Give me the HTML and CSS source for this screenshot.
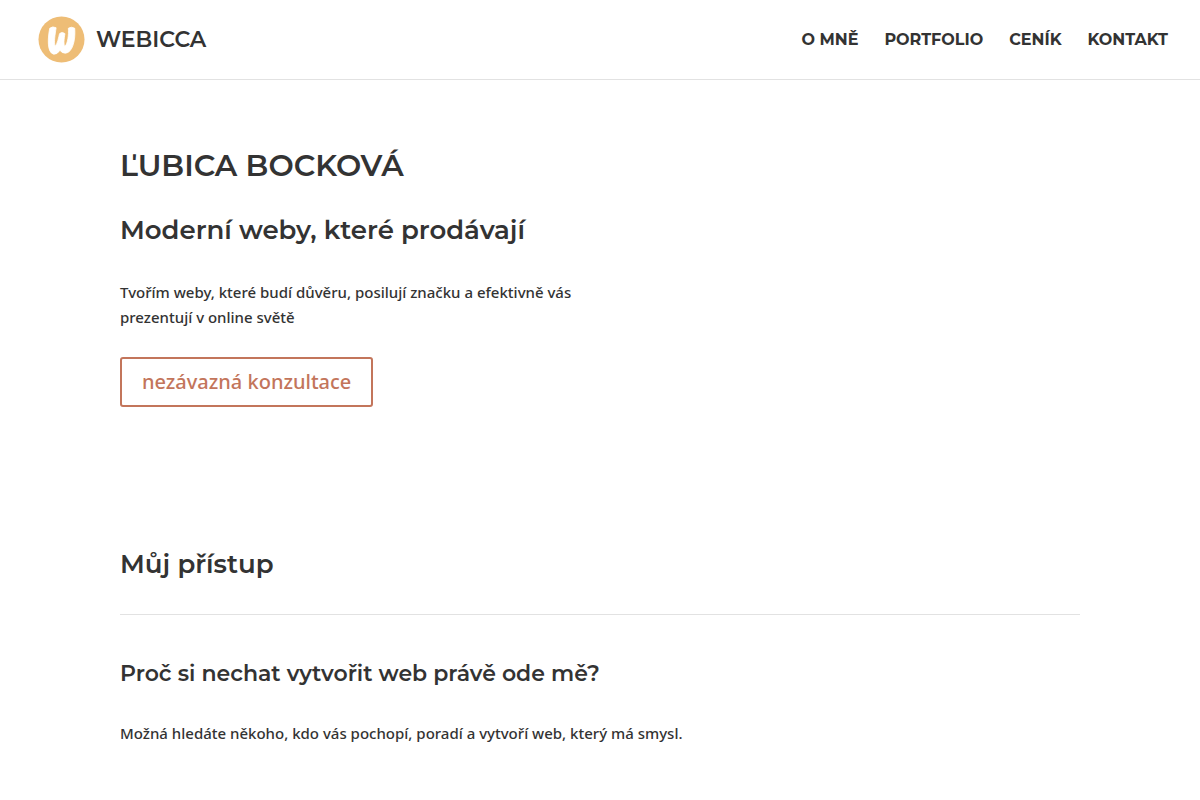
FILE: index.html
```html
<!doctype html>
<html lang="cs">
    <head>
        <meta charset="UTF-8" />
        <meta name="viewport" content="width=device-width, initial-scale=1" />
        <title>Webicca</title>
        <link rel="stylesheet" href="styles.css">
    </head>
    <body>
        <header class="site-header">
            <a class="logo" href="#" aria-label="Webicca">
                <svg class="logo-mark" viewBox="0 0 48 48" aria-hidden="true">
                    <circle cx="24" cy="24" r="23.5" fill="#eebd76" />
                    <path d="M12 12.500 Q15 10 18.500 12 C17.500 19 16 27 17.500 31 C20 28 21 22 22 18 Q24.500 15.500 27.500 18 C26.500 24 26 29 27.500 31 C30.500 28 31.500 19 31 12.500 Q34 10.500 37.500 12.500 C38.500 24 35.500 37.500 28 38 Q24 38 22.500 35 Q19.500 39.500 16 39 C9 37.500 10 22 12 12.500 Z" fill="#fff" stroke="#fff" stroke-width="0.8" stroke-linejoin="round" />
                </svg>
                <span class="logo-text">WEBICCA</span>
            </a>
            <nav class="site-nav">
                <a href="#o-mne">O MNĚ</a>
                <a href="#portfolio">PORTFOLIO</a>
                <a href="#cenik">CENÍK</a>
                <a href="#kontakt">KONTAKT</a>
            </nav>
        </header>

        <main class="container">
            <section class="hero">
                <h1>ĽUBICA BOCKOVÁ</h1>
                <h2>Moderní weby, které prodávají</h2>
                <p>Tvořím weby, které budí důvěru, posilují značku a efektivně vás prezentují v online světě</p>
                <a class="button" href="#kontakt">nezávazná konzultace</a>
            </section>

            <section class="approach" id="o-mne">
                <h2>Můj přístup</h2>
                <hr />
                <h3>Proč si nechat vytvořit web právě ode mě?</h3>
                <p>Možná hledáte někoho, kdo vás pochopí, poradí a vytvoří web, který má smysl.</p>
            </section>
        </main>
    </body>
</html>
```

FILE: styles.css
```css
:root {
    --color-text: #333;
    --color-accent: #c3755b;
    --color-line: #e2e2e2;
    --font-heading: Montserrat, "Open Sans", sans-serif;
    --font-body: "Noto Sans", sans-serif;
}

* {
    box-sizing: border-box;
}

body {
    margin: 0;
    background: #fff;
    color: var(--color-text);
    font-family: var(--font-body);
    font-size: 15px;
    font-weight: 500;
    line-height: 25px;
}

h1,
h2,
h3,
p {
    margin: 0;
}

h1,
h2,
h3 {
    font-family: var(--font-heading);
    font-weight: 600;
}

h1 {
    font-size: 30px;
    line-height: 40px;
}

h2 {
    font-size: 26px;
    line-height: 32px;
}

h3 {
    font-size: 22px;
    line-height: 28px;
}

a {
    color: inherit;
    text-decoration: none;
}

/* Header */
.site-header {
    display: flex;
    align-items: center;
    justify-content: space-between;
    padding: 16px 32px 16px 38px;
    border-bottom: 1px solid var(--color-line);
}

.logo {
    display: flex;
    align-items: center;
    gap: 11px;
}

.logo-mark {
    width: 47px;
    height: 47px;
}

.logo-text {
    font-family: var(--font-heading);
    font-size: 22px;
    font-weight: 600;
}

.site-nav {
    display: flex;
    gap: 26px;
    font-family: var(--font-heading);
    font-size: 16px;
    font-weight: 700;
}

/* Content */
.container {
    width: 80%;
    margin: 0 auto;
}

.hero {
    display: flex;
    flex-direction: column;
    align-items: flex-start;
    width: 50%;
    padding: 66px 0 70px;
}

.hero h2 {
    margin: 28px 0 34px;
}

.button {
    margin-top: 27px;
    padding: 6px 20px;
    border: 2px solid var(--color-accent);
    border-radius: 3px;
    color: var(--color-accent);
    font-size: 20px;
    line-height: 34px;
}

.approach {
    padding: 71px 0;
}

.approach hr {
    margin: 34px 0 45px;
    border: 0;
    border-top: 1px solid var(--color-line);
}

.approach p {
    margin-top: 33px;
}
```
